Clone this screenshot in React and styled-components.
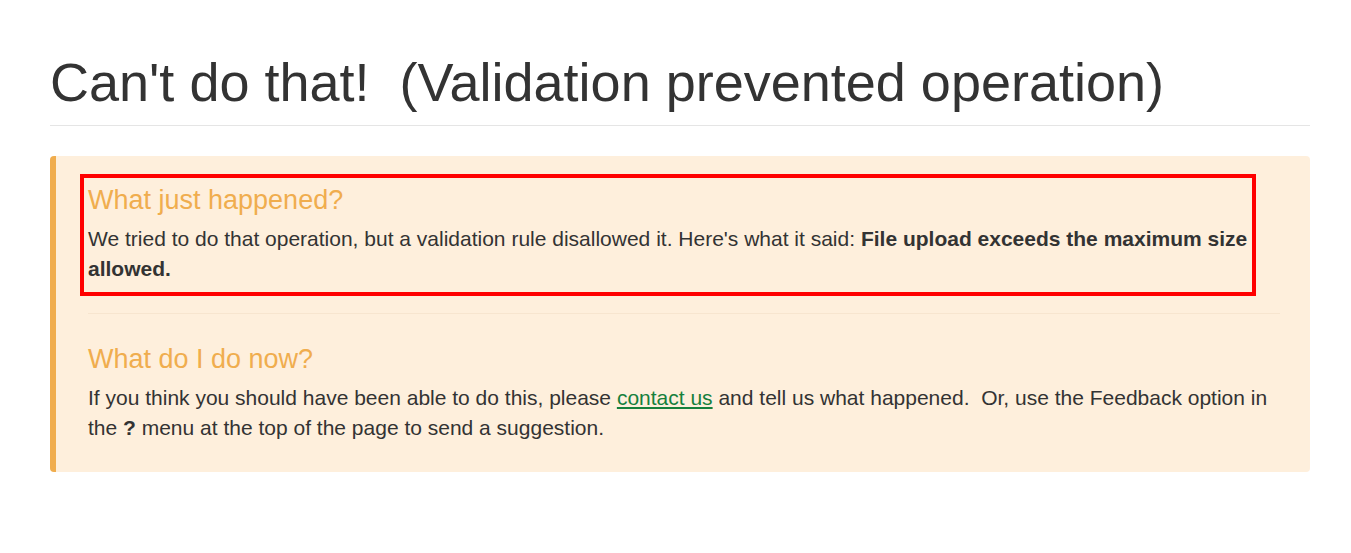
import React from "react";
import styled, { createGlobalStyle } from "styled-components";

const Global = createGlobalStyle`
  html, body { margin: 0; padding: 0; background: #fff; }
  body {
    font-family: "Liberation Sans", Arial, Helvetica, sans-serif;
    color: #333;
  }
`;

const Page = styled.div`
  padding: 0 41px 0 50px;
`;

const Title = styled.h1`
  margin: 0;
  padding-top: 53px;
  padding-bottom: 13px;
  font-size: 54px;
  font-weight: 400;
  line-height: 1.1;
  color: #333;
  border-bottom: 1px solid #e5e5e5;
`;

const Alert = styled.div`
  margin-top: 30px;
  background: #feefdc;
  border-left: 6px solid #f0ad4e;
  border-radius: 4px;
  padding: 18px 30px 25px 32px;
`;

const Section = styled.section`
  ${(p) =>
    p.$highlighted &&
    `
    margin-left: -8px;
    width: 1176px;
    box-sizing: border-box;
    border: 4px solid #ff0000;
    padding: 0 4px 4px 4px;
  `}
`;

const Heading = styled.h3`
  margin: 0;
  padding-top: ${(p) => (p.$first ? "8px" : "9px")};
  font-size: 27px;
  font-weight: 400;
  line-height: 1.1;
  color: #f0ad4e;
`;

const Text = styled.p`
  margin: 8px 0 0;
  font-size: 21px;
  line-height: 30px;
  padding-bottom: 4px;
`;

const Divider = styled.hr`
  margin: 17px 0 22px;
  border: 0;
  border-top: 1px solid #f7e5cf;
`;

const Link = styled.a`
  color: #16803c;
  text-decoration: underline;
`;

export default function App() {
  return (
    <>
      <Global />
      <Page>
        <Title>Can't do that!&nbsp; (Validation prevented operation)</Title>
        <Alert>
          <Section $highlighted>
            <Heading $first>What just happened?</Heading>
            <Text>
              We tried to do that operation, but a validation rule disallowed it. Here's what it said:{" "}
              <b>File upload exceeds the maximum size allowed.</b>
            </Text>
          </Section>
          <Divider />
          <Section>
            <Heading>What do I do now?</Heading>
            <Text>
              If you think you should have been able to do this, please <Link href="#">contact us</Link> and tell
              us what happened.&nbsp; Or, use the Feedback option in the <b>?</b> menu at the top of the page to
              send a suggestion.
            </Text>
          </Section>
        </Alert>
      </Page>
    </>
  );
}
